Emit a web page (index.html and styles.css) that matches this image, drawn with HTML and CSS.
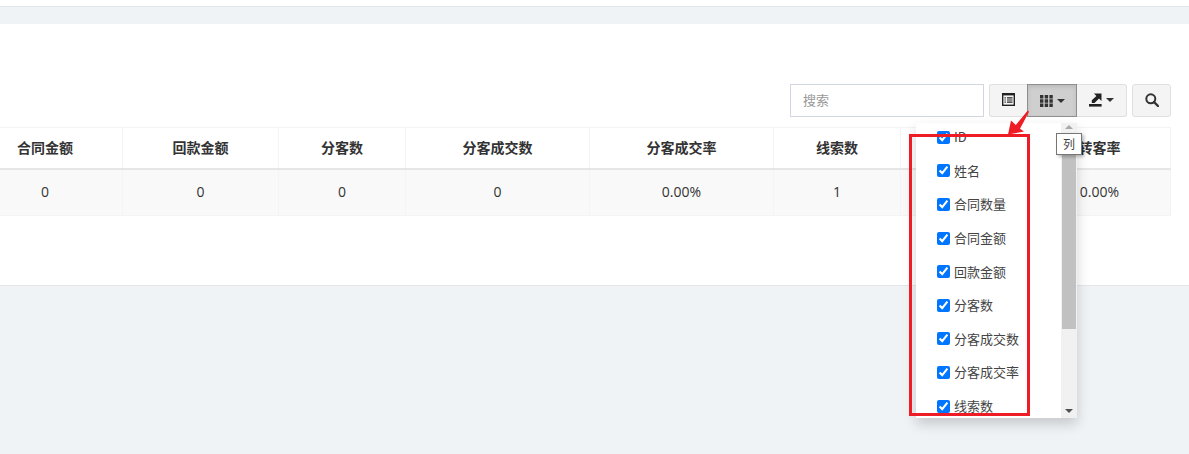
FILE: index.html
```html
<!DOCTYPE html>
<html lang="zh">
<head>
<meta charset="utf-8">
<title>列</title>
<link rel="stylesheet" href="styles.css">
</head>
<body>
<div class="topstrip"></div>
<main class="panel">
  <div class="toolbar">
    <input class="search" type="text" placeholder="搜索">
    <div class="btn-group">
      <button class="btn btn-first" type="button">
        <svg width="13" height="13" viewBox="0 0 13 13"><rect x=".7" y=".7" width="11.600" height="11.600" fill="none" stroke="#222" stroke-width="1.400"/><path d="M0 0h13v2.400H0z" fill="#222"/><path d="M2.500 4.800h1.300M5 4.800h5.500M2.500 7h1.300M5 7h5.500M2.500 9.200h1.300M5 9.200h5.500" stroke="#222" stroke-width="1.200"/></svg>
      </button>
      <button class="btn btn-active" type="button">
        <svg width="13" height="12" viewBox="0 0 13 12"><path d="M0 0h3.400v3.400H0zM4.700 0h3.400v3.400H4.700zM9.400 0h3.400v3.400H9.400zM0 4.300h3.400v3.400H0zM4.700 4.300h3.400v3.400H4.700zM9.400 4.300h3.400v3.400H9.400zM0 8.600h3.400V12H0zM4.700 8.600h3.400V12H4.700zM9.400 8.600h3.400V12H9.400z" fill="#333"/></svg>
        <span class="caret"></span>
      </button>
      <button class="btn btn-last" type="button">
        <svg width="13" height="14" viewBox="0 0 13 14"><path d="M0 11h12.600v2.600H0z" fill="#222"/><path d="M5 .5H12.500V8L10 5.600 5.500 10H2.800V7.200L7.400 3z" fill="#222"/></svg>
        <span class="caret"></span>
      </button>
    </div>
    <button class="btn btn-search" type="button">
      <svg width="14" height="14" viewBox="0 0 14 14"><circle cx="5.800" cy="5.800" r="4.500" fill="none" stroke="#333" stroke-width="2"/><path d="M9 9l4 4" stroke="#333" stroke-width="2.400" stroke-linecap="round"/></svg>
    </button>
  </div>
  <div class="table-wrap">
    <table class="data">
      <colgroup>
        <col class="c155"><col class="c156"><col class="c127"><col class="c184"><col class="c184"><col class="c127"><col class="c128"><col class="c142">
      </colgroup>
      <thead>
        <tr><th>合同金额</th><th>回款金额</th><th>分客数</th><th>分客成交数</th><th>分客成交率</th><th>线索数</th><th></th><th>转客率</th></tr>
      </thead>
      <tbody>
        <tr><td>0</td><td>0</td><td>0</td><td>0</td><td>0.00%</td><td>1</td><td></td><td>0.00%</td></tr>
      </tbody>
    </table>
  </div>
</main>

<div class="dropdown">
  <ul class="col-list">
    <li><label><input type="checkbox" checked>ID</label></li>
    <li><label><input type="checkbox" checked>姓名</label></li>
    <li><label><input type="checkbox" checked>合同数量</label></li>
    <li><label><input type="checkbox" checked>合同金额</label></li>
    <li><label><input type="checkbox" checked>回款金额</label></li>
    <li><label><input type="checkbox" checked>分客数</label></li>
    <li><label><input type="checkbox" checked>分客成交数</label></li>
    <li><label><input type="checkbox" checked>分客成交率</label></li>
    <li><label><input type="checkbox" checked>线索数</label></li>
  </ul>
  <div class="scrollbar">
    <span class="arrow-up"></span>
    <span class="thumb"></span>
    <span class="arrow-down"></span>
  </div>
</div>

<div class="tooltip">列</div>
<div class="red-box"></div>
<svg class="red-arrow" width="30" height="30" viewBox="0 0 30 30"><path d="M5 24.500L8 10.500 12.800 15 24.800 .5 26 1.800 17 18.800 21 21.500z" fill="#ee1c25"/></svg>
</body>
</html>
```
FILE: styles.css
```css
* { box-sizing: border-box; }
html, body { margin: 0; padding: 0; }
body {
  height: 454px;
  overflow: hidden;
  background: #f0f3f6;
  font-family: "Open Sans", "Noto Sans CJK SC", sans-serif;
  font-size: 14px;
  color: #333;
}
.topstrip {
  height: 7px;
  background: #fff;
  border-bottom: 1px solid #e4e7ea;
}
.panel {
  margin-top: 17px;
  height: 262px;
  background: #fff;
  border-bottom: 1px solid #e4e7ea;
  padding: 60px 18px 0 0;
}
.toolbar {
  display: flex;
  justify-content: flex-end;
  height: 33px;
}
.search {
  width: 194px;
  height: 33px;
  border: 1px solid #d2d6de;
  padding: 0 12px 2px;
  font: 13px "Noto Sans CJK SC", sans-serif;
  color: #555;
  outline: none;
}
.search::placeholder { color: #999; }
.btn-group { display: flex; margin-left: 5px; }
.btn {
  display: flex;
  align-items: center;
  justify-content: center;
  gap: 4px;
  height: 33px;
  padding: 0;
  background: #f4f4f4;
  border: 1px solid #e0e0e0;
  color: #333;
}
.btn-first { width: 38px; border-radius: 3px 0 0 3px; border-right: 0; padding-bottom: 2px; }
.btn-active {
  width: 50px;
  background: #cfcfcf;
  border-color: #8f8f8f;
  box-shadow: inset 0 2px 4px rgba(0, 0, 0, .1);
}
.btn-last { width: 50px; border-radius: 0 3px 3px 0; border-left: 0; padding-bottom: 2px; }
.btn-search { width: 39px; margin-left: 5px; border-radius: 3px; padding-bottom: 2px; }
.caret {
  width: 0;
  height: 0;
  border-left: 4px solid transparent;
  border-right: 4px solid transparent;
  border-top: 4px solid #333;
}
.table-wrap {
  display: flex;
  justify-content: flex-end;
  margin-top: 10px;
  overflow: hidden;
}
.data {
  flex: none;
  width: 1203px;
  table-layout: fixed;
  border-collapse: collapse;
  text-align: center;
}
.c155 { width: 155px; }
.c156 { width: 156px; }
.c127 { width: 127px; }
.c128 { width: 128px; }
.c142 { width: 142px; }
.c184 { width: 184px; }
.data th, .data td {
  border: 1px solid #f4f4f4;
  padding: 0 0 2px;
}
.data th {
  height: 41px;
  font-weight: 700;
  border-bottom: 2px solid #e6e6e6;
}
.data td {
  height: 47px;
  background: #f9f9f9;
}
.dropdown {
  position: absolute;
  left: 916px;
  top: 123px;
  width: 161px;
  height: 295px;
  display: flex;
  background: #fff;
  box-shadow: 0 6px 12px rgba(0, 0, 0, .175);
  overflow: hidden;
}
.col-list {
  flex: 1;
  list-style: none;
  margin: -2px 0 0;
  padding: 0 0 0 21px;
  font-family: "Noto Sans CJK SC", sans-serif;
  font-size: 13px;
  color: #444;
}
.col-list li {
  height: 33.6px;
  display: flex;
  align-items: center;
}
.col-list label { display: flex; align-items: center; margin-top: -2px; }
.col-list input {
  width: 13px;
  height: 13px;
  margin: 1px 4px 0 0;
}
.scrollbar {
  position: relative;
  width: 16px;
  background: #f1f1f1;
}
.thumb {
  position: absolute;
  left: 1px;
  top: 16px;
  width: 14px;
  height: 190px;
  background: #c1c1c1;
}
.arrow-up, .arrow-down {
  position: absolute;
  left: 4px;
  width: 0;
  height: 0;
  border-left: 4px solid transparent;
  border-right: 4px solid transparent;
}
.arrow-up { top: 2px; border-bottom: 4px solid #a8a8a8; }
.arrow-down { bottom: 5px; border-top: 4px solid #505050; }
.tooltip {
  position: absolute;
  left: 1056px;
  top: 133px;
  width: 26px;
  height: 22px;
  background: #fff;
  border: 1px solid #767676;
  font-family: "Noto Sans CJK SC", sans-serif;
  font-size: 12px;
  line-height: 19px;
  text-align: center;
  color: #444;
  box-shadow: 2px 2px 3px rgba(0, 0, 0, .25);
}
.red-box {
  position: absolute;
  left: 909px;
  top: 134px;
  width: 121px;
  height: 282px;
  border: 3px solid #ee1c25;
}
.red-arrow {
  position: absolute;
  left: 1003px;
  top: 110px;
}
```
